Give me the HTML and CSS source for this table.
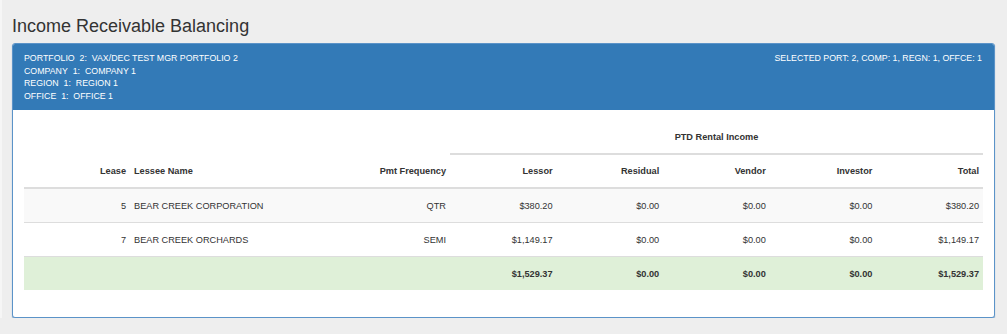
FILE: index.html
```html
<!DOCTYPE html>
<html>
<head>
<meta charset="utf-8">
<link rel="stylesheet" href="styles.css">
</head>
<body>
<div class="page">
  <h3 class="title">Income Receivable Balancing</h3>
  <div class="panel">
    <div class="panel-heading">
      <div class="filters">
        <div>PORTFOLIO&nbsp; 2:&nbsp; VAX/DEC TEST MGR PORTFOLIO 2</div>
        <div>COMPANY&nbsp; 1:&nbsp; COMPANY 1</div>
        <div>REGION&nbsp; 1:&nbsp; REGION 1</div>
        <div>OFFICE&nbsp; 1:&nbsp; OFFICE 1</div>
      </div>
      <div class="selected">SELECTED PORT: 2, COMP: 1, REGN: 1, OFFCE: 1</div>
    </div>
    <div class="panel-body">
      <table class="grid">
        <colgroup>
          <col class="c-lease"><col class="c-name"><col class="c-freq">
          <col class="c-money"><col class="c-money"><col class="c-money"><col class="c-money"><col class="c-money">
        </colgroup>
        <thead>
          <tr class="group-row">
            <th></th><th></th><th></th>
            <th colspan="5" class="group">PTD Rental Income</th>
          </tr>
          <tr class="head-row">
            <th class="r">Lease</th>
            <th class="l">Lessee Name</th>
            <th class="r">Pmt Frequency</th>
            <th class="r">Lessor</th>
            <th class="r">Residual</th>
            <th class="r">Vendor</th>
            <th class="r">Investor</th>
            <th class="r">Total</th>
          </tr>
        </thead>
        <tbody>
          <tr class="striped">
            <td class="r">5</td>
            <td class="l">BEAR CREEK CORPORATION</td>
            <td class="r">QTR</td>
            <td class="r">$380.20</td>
            <td class="r">$0.00</td>
            <td class="r">$0.00</td>
            <td class="r">$0.00</td>
            <td class="r">$380.20</td>
          </tr>
          <tr>
            <td class="r">7</td>
            <td class="l">BEAR CREEK ORCHARDS</td>
            <td class="r">SEMI</td>
            <td class="r">$1,149.17</td>
            <td class="r">$0.00</td>
            <td class="r">$0.00</td>
            <td class="r">$0.00</td>
            <td class="r">$1,149.17</td>
          </tr>
          <tr class="total">
            <td></td>
            <td></td>
            <td></td>
            <td class="r">$1,529.37</td>
            <td class="r">$0.00</td>
            <td class="r">$0.00</td>
            <td class="r">$0.00</td>
            <td class="r">$1,529.37</td>
          </tr>
        </tbody>
      </table>
    </div>
  </div>
</div>
</body>
</html>
```

FILE: styles.css
```css
html, body {
  margin: 0;
  padding: 0;
  background: #eeeeee;
}

body {
  font-family: "Liberation Sans", Arial, sans-serif;
  color: #333333;
}

.page {
  padding: 16px 12px 0 12px;
  border-left: 2px solid #f6f6f6;
}

.title {
  margin: 0 0 7px -2px;
  font-size: 18px;
  font-weight: normal;
  line-height: 20px;
  color: #333333;
}

.panel {
  margin-left: -2px;
  width: 981px;
  background: #ffffff;
  border: 1px solid #5b93c8;
  border-radius: 3px;
  box-shadow: 0 1px 1px rgba(51, 122, 183, 0.6);
}

.panel-heading {
  display: flex;
  justify-content: space-between;
  align-items: flex-start;
  background: #337ab7;
  color: #ffffff;
  padding: 8px 12px 8px 11px;
  font-size: 8.8px;
  line-height: 12.5px;
  border-radius: 2px 2px 0 0;
}

.panel-body {
  padding: 11px 11px 27px 11px;
}

.grid {
  width: 959px;
  table-layout: fixed;
  border-collapse: separate;
  border-spacing: 0;
  font-size: 9.2px;
  color: #333333;
}

.c-lease { width: 106px; }
.c-name { width: 213px; }
.c-freq { width: 107px; }
.c-money { width: 106.6px; }

.grid th,
.grid td {
  padding: 8px 4px;
  line-height: 16px;
  white-space: nowrap;
}

.grid th {
  font-weight: bold;
}

.grid .group {
  text-align: center;
  border-bottom: 2px solid #dddddd;
}

.head-row th {
  border-bottom: 2px solid #dddddd;
}

.grid td {
  padding: 9px 4px 7px 4px;
  line-height: 17px;
}

.grid tbody tr:not(.total) td {
  border-bottom: 1px solid #dddddd;
}

.striped td {
  background: #f9f9f9;
}

.total td {
  background: #dff0d8;
  font-weight: bold;
}

.r { text-align: right; }
.l { text-align: left; }
```
